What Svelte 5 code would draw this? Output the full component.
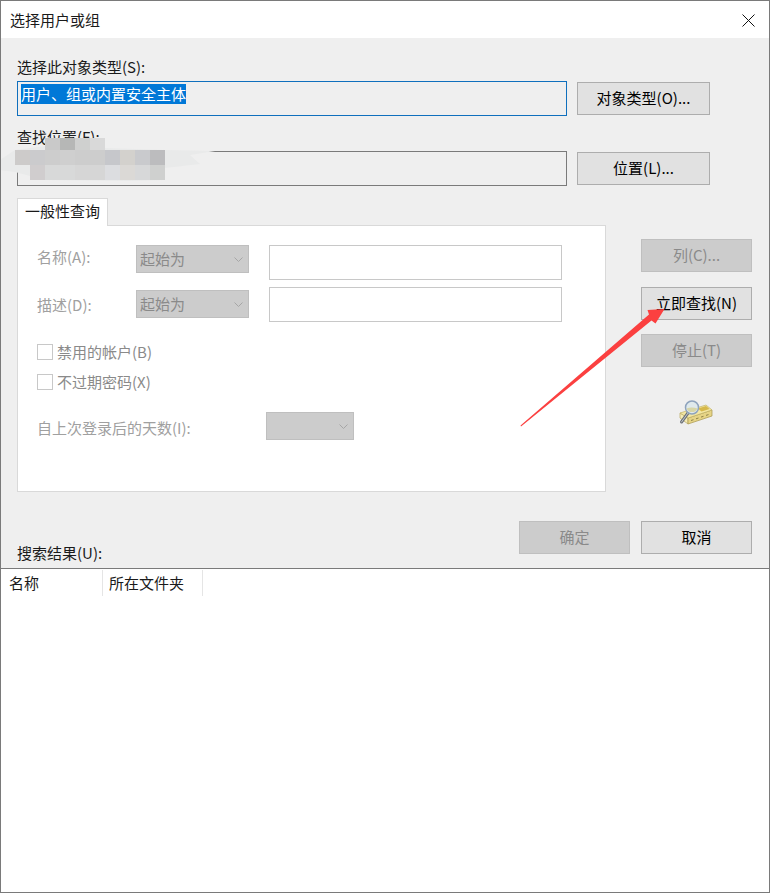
<script>
  const smudge = [
    [45, 138, 15, 12, '#c9c9c9'], [60, 138, 15, 12, '#b6b7b6'], [75, 138, 15, 12, '#cfd0cf'], [90, 138, 15, 12, '#d9d9d9'],
    [15, 150, 15, 15, '#cdcbca'], [30, 150, 15, 15, '#cbcbcd'], [45, 150, 15, 15, '#cdcdcd'], [60, 150, 15, 15, '#cfcfcf'],
    [75, 150, 15, 15, '#cdcdcd'], [90, 150, 15, 15, '#cdcdcd'], [105, 150, 15, 15, '#c6c7cb'], [120, 150, 15, 15, '#d3d1cd'],
    [135, 150, 15, 15, '#c9cacd'], [150, 150, 15, 15, '#bcbcbe'],
    [30, 165, 15, 15, '#d0cdce'], [45, 165, 15, 15, '#d8d9d9'], [60, 165, 15, 15, '#d8d9d9'], [75, 165, 15, 15, '#d6d6d6'],
    [90, 165, 15, 15, '#d6d6d6'], [105, 165, 15, 15, '#dcdde0'], [120, 165, 15, 15, '#dbd9d6'], [135, 165, 15, 15, '#d7d8d9'],
    [150, 165, 15, 15, '#cfd0cf']
  ]
</script>

<div class="window">
  <header class="title">
    <span>选择用户或组</span>
    <svg class="close" width="13" height="13" viewBox="0 0 13 13">
      <path d="M.5.5l12 12M12.5.5l-12 12" stroke="#111" fill="none" />
    </svg>
  </header>

  <main class="body">
    <div class="label first">选择此对象类型(S):</div>
    <div class="pick">
      <div class="field focus"><span class="sel">用户、组或内置安全主体</span></div>
      <button class="btn wide">对象类型(O)...</button>
    </div>

    <div class="label second">查找位置(F):</div>
    <div class="pick">
      <div class="field"></div>
      <button class="btn wide">位置(L)...</button>
    </div>

    <div class="filters">
      <section class="query">
        <div class="tab">一般性查询</div>
        <div class="panel">
          <div class="line">
            <span class="cap">名称(A):</span>
            <div class="combo"><span>起始为</span>{@render chevron()}</div>
            <div class="text"></div>
          </div>
          <div class="line next">
            <span class="cap">描述(D):</span>
            <div class="combo low"><span>起始为</span>{@render chevron()}</div>
            <div class="text"></div>
          </div>
          <div class="check c1"><i></i>禁用的帐户(B)</div>
          <div class="check c2"><i></i>不过期密码(X)</div>
          <div class="days">
            <span class="cap long">自上次登录后的天数(I):</span>
            <div class="combo short"><span></span>{@render chevron()}</div>
          </div>
        </div>
      </section>

      <aside class="side">
        <button class="btn" disabled>列(C)...</button>
        <button class="btn now">立即查找(N)</button>
        <button class="btn stop" disabled>停止(T)</button>
        <svg class="finder" width="40" height="30" viewBox="0 0 40 30">
          <path d="M4 13 12 18v6L4 18z" fill="#f4ecb8" stroke="#b9a75c" stroke-width=".7" />
          <path d="M12 18 36 10v6L12 24z" fill="#e6d486" stroke="#a8974f" stroke-width=".7" />
          <path d="M4 13 30 5l6 5-24 8z" fill="#f3e7a4" stroke="#c2b164" stroke-width=".7" />
          <path d="M22 8.500 30 6l3.500 3-8 2.600z" fill="#d6b84a" />
          <path d="M15 20.500l2.500-.8M20 18.800l2.500-.8M25 17.100l2.500-.8M30 15.400l2.500-.8" stroke="#8f8248" stroke-width="1" />
          <path d="M5.500 22 12 13" stroke="#6d7278" stroke-width="3" stroke-linecap="round" />
          <path d="M5.500 22 12 13" stroke="#c4c8cc" stroke-width="1" stroke-linecap="round" />
          <circle cx="16" cy="7.500" r="6.500" fill="#dfe9ec" stroke="#8ea3bd" stroke-width="1.500" />
          <path d="M10.500 8.500q5-2 11 0a6 6 0 0 1-11 0z" fill="#d7d6a8" />
        </svg>
      </aside>
    </div>

    <div class="foot">
      <div class="label results">搜索结果(U):</div>
      <div class="actions">
        <button class="btn" disabled>确定</button>
        <button class="btn">取消</button>
      </div>
    </div>
  </main>

  <div class="list">
    <div class="col c-name">名称</div>
    <div class="col c-dir">所在文件夹</div>
  </div>

  <!-- the screenshot's own markup: pixelated blur and red arrow drawn on top -->
  <svg class="overlay" width="770" height="893" viewBox="0 0 770 893">
    <path d="M0 160 15 150 45 146 165 150 215 151 190 155 200 164 165 168 165 180 128 181 45 180 15 172 0 170z" fill="#e9eaea" />
    {#each smudge as [x, y, w, h, fill]}
      <rect {x} {y} width={w} height={h} {fill} />
    {/each}
    <path d="M520.500 425.500 649 314.500 647.500 310 664.500 309 655.500 323.500 651.500 320.500 521 426.500z" fill="#fb4040" />
  </svg>
</div>

{#snippet chevron()}
  <svg class="chev" width="9" height="5" viewBox="0 0 9 5">
    <path d="M.5.500 4.500 4.500 8.500.5" stroke="#a6a6a6" fill="none" />
  </svg>
{/snippet}

<style>
  :global(body) {
    margin: 0;
    background: #efefef;
  }
  .window {
    position: relative;
    width: 770px;
    height: 893px;
    box-sizing: border-box;
    border: 1px solid #7a7a7a;
    display: flex;
    flex-direction: column;
    background: #efefef;
    font: 15px/20px "Noto Sans CJK SC", "Noto Sans", sans-serif;
    color: #1a1a1a;
    overflow: hidden;
  }
  .title {
    height: 37px;
    flex: none;
    background: #fff;
    display: flex;
    align-items: center;
    justify-content: space-between;
    padding: 0 14px 0 9px;
  }
  .close {
    margin-top: 1px;
  }
  .body {
    padding-left: 16px;
    flex: none;
  }
  .first {
    margin-top: 19px;
  }
  .second {
    margin-top: 11px;
  }
  .pick {
    display: flex;
    align-items: center;
    gap: 10px;
    margin-top: 4px;
    height: 35px;
  }
  .field {
    width: 550px;
    height: 35px;
    box-sizing: border-box;
    border: 1px solid #7a7a7a;
    padding: 2px 3px;
  }
  .focus {
    border-color: #0f6fbd;
  }
  .sel {
    display: inline-block;
    background: #0078d7;
    color: #fff;
    line-height: 20px;
    height: 20px;
  }
  .btn {
    display: block;
    width: 111px;
    height: 33px;
    padding: 0 0 2px;
    box-sizing: border-box;
    border: 1px solid #adadad;
    background: #e1e1e1;
    color: #000;
    font: inherit;
  }
  .btn:disabled {
    background: #cccccc;
    border-color: #bfbfbf;
    color: #8a8a8a;
  }
  .btn.wide {
    width: 133px;
  }
  .filters {
    display: flex;
    gap: 35px;
    margin-top: 12px;
  }
  .query {
    width: 589px;
  }
  .tab {
    position: relative;
    width: 91px;
    height: 28px;
    box-sizing: border-box;
    border: 1px solid #d9d9d9;
    border-bottom: 0;
    background: #fff;
    text-align: center;
    line-height: 23px;
    margin-bottom: -1px;
  }
  .panel {
    height: 267px;
    box-sizing: border-box;
    border: 1px solid #d9d9d9;
    background: #fff;
    padding: 19px 0 0 19px;
    color: #a0a0a0;
  }
  .line {
    display: flex;
    align-items: flex-start;
    height: 35px;
  }
  .next {
    margin-top: 7px;
  }
  .cap {
    width: 99px;
    flex: none;
    line-height: 24px;
  }
  .next .cap {
    line-height: 35px;
  }
  .combo {
    width: 113px;
    height: 28px;
    flex: none;
    box-sizing: border-box;
    border: 1px solid #bfbfbf;
    background: #cccccc;
    color: #8a8a8a;
    display: flex;
    align-items: center;
    justify-content: space-between;
    padding: 0 5px 0 3px;
  }
  .low {
    margin-top: 3px;
  }
  .chev {
    flex: none;
  }
  .text {
    width: 293px;
    height: 35px;
    margin-left: 20px;
    box-sizing: border-box;
    border: 1px solid #c8c8c8;
    background: #fff;
  }
  .check {
    display: flex;
    align-items: center;
    gap: 4px;
    height: 16px;
    color: #8a8a8a;
  }
  .check i {
    width: 16px;
    height: 16px;
    box-sizing: border-box;
    border: 1px solid #c8c8c8;
  }
  .c1 {
    margin-top: 22px;
  }
  .c2 {
    margin-top: 14px;
  }
  .days {
    display: flex;
    margin-top: 22px;
    height: 28px;
  }
  .long {
    width: 229px;
    line-height: 32px;
  }
  .short {
    width: 88px;
  }
  .side {
    padding-top: 41px;
  }
  .now {
    margin-top: 15px;
  }
  .stop {
    margin-top: 14px;
  }
  .finder {
    display: block;
    margin: 33px 0 0 35px;
  }
  .foot {
    display: flex;
    justify-content: space-between;
    height: 47px;
    margin-top: 29px;
    width: 735px;
  }
  .results {
    align-self: flex-end;
    margin-bottom: 5px;
  }
  .actions {
    display: flex;
    gap: 11px;
  }
  .list {
    flex: 1;
    background: #fff;
    border-top: 1px solid #7a7a7a;
    padding-top: 1px;
    display: flex;
    align-items: flex-start;
  }
  .col {
    height: 26px;
    box-sizing: border-box;
    border-right: 1px solid #e5e5e5;
    padding-left: 8px;
    line-height: 26px;
  }
  .c-name {
    width: 102px;
  }
  .c-dir {
    width: 100px;
    padding-left: 6px;
  }
  .overlay {
    position: absolute;
    left: -1px;
    top: -1px;
    pointer-events: none;
  }
</style>
